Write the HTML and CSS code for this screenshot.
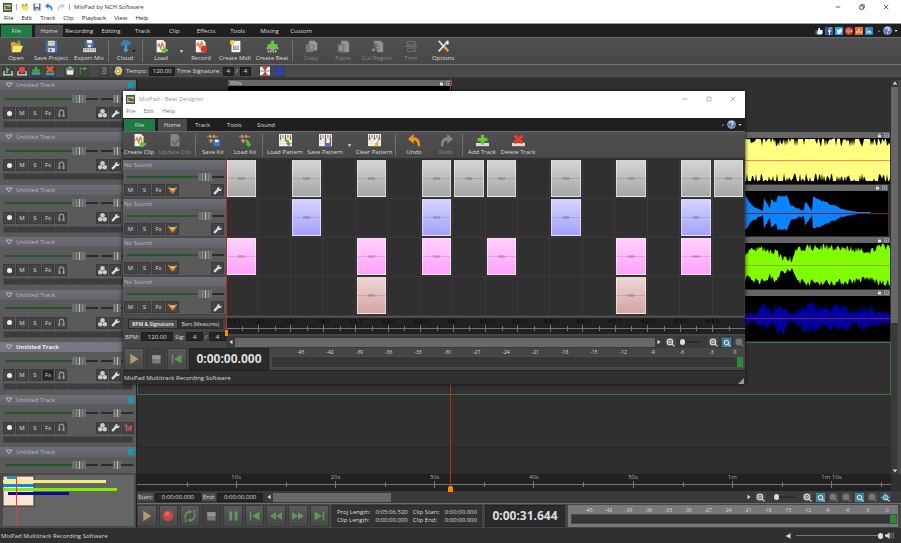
FILE: index.html
```
<!DOCTYPE html>
<html lang="en">
<head>
    <meta charset="UTF-8">
    <meta name="viewport" content="width=device-width, initial-scale=1.0">
    <title>MixPad by NCH Software</title>
    <link rel="stylesheet" href="styles.css">
</head>
<body>
    <svg class="defs" aria-hidden="true">
        <symbol id="logo" viewBox="0 0 16 16"><rect width="16" height="16" fill="#2c5580"/><rect x="2" y="3" width="12" height="10" fill="#e8cf45"/><path d="M3 6h4v5M9 5v5h4V6M3 9h10" stroke="#243f63" stroke-width="1.5" fill="none"/></symbol>
        <symbol id="folder" viewBox="0 0 16 16"><path d="M1 3l5-1 1 2h6v3H4L2 14z" fill="#d9a92c"/><path d="M4 7h12l-3 8H2z" fill="#f6e36c"/><path d="M8 1l5 0-1 5z" fill="#5bb53c"/></symbol>
        <symbol id="disk" viewBox="0 0 16 16"><path d="M1 1h14v14H1z" fill="#3f78b5"/><path d="M4 1h8v6H4z" fill="#f2eadb"/><path d="M4 10h8v5H4z" fill="#e2e8ee"/><path d="M5 3h6M5 5h6" stroke="#dc9a57"/><path d="M6 11h2v3H6z" fill="#345"/></symbol>
        <symbol id="disk2" viewBox="0 0 16 16"><path d="M1 1h14v14H1z" fill="#6566ad"/><path d="M4 1h8v7H4z" fill="#fff"/><path d="M5 11h6v4H5z" fill="#d8d8ec"/></symbol>
        <symbol id="export" viewBox="0 0 16 16"><path d="M3 0h10v9H3z" fill="#3f78b5"/><path d="M5 0h6v4H5z" fill="#f2eadb"/><path d="M6 6h4v3H6z" fill="#dde"/><path d="M0 10h16v5H0z" fill="#cfd3d2"/><path d="M2 11v2M5 11v2M8 11v2M11 11v2M14 11v2" stroke="#6a7a70"/></symbol>
        <symbol id="cloud" viewBox="0 0 16 16"><path d="M3 7a3 3 0 0 1 1-5 4 4 0 0 1 7-1 3 3 0 0 1 3 5l-3 1z" fill="#2f80bd"/><path d="M7 6h3v5h2l-4 5-3-5h2z" fill="#4b9bd0"/></symbol>
        <symbol id="clipadd" viewBox="0 0 16 16"><path d="M2 0h8l3 3v12H2z" fill="#f8f5ee"/><path d="M3 8l2-3 2 5 2-6 2 4" stroke="#dc8450" stroke-width="2" fill="none"/><path d="M10 9h3v2h3v3h-3v2h-3v-2H8v-3h2z" fill="#5dc43a"/></symbol>
        <symbol id="cliprec" viewBox="0 0 16 16"><path d="M1 0h9l3 3v12H1z" fill="#f8f5ee"/><path d="M2 7l2-3 2 5 2-6 2 4" stroke="#dc8450" stroke-width="2" fill="none"/><circle cx="11" cy="11" r="4" fill="#e23126"/></symbol>
        <symbol id="midi" viewBox="0 0 16 16"><path d="M3 1h11v14H3z" fill="#f5f5f5"/><path d="M5 7h7v5H5z" fill="#777"/><path d="M7 7v4M9 7v4M11 7v4" stroke="#fff"/><circle cx="4" cy="3" r="3" fill="#f4cf2f"/></symbol>
        <symbol id="addrow" viewBox="0 0 16 16"><path d="M0 11h16v4H0z" fill="#d7ded5"/><path d="M6 1h4v4h4v4h-4v4H6V9H2V5h4z" fill="#5fcf35"/></symbol>
        <symbol id="beat" viewBox="0 0 16 16"><path d="M1 10h14M2 14h12" stroke="#bbb" stroke-width="3" stroke-dasharray="2 1"/><path d="M6 1h4v4h4v4h-4v4H6V9H2V5h4z" fill="#5fcf35"/></symbol>
        <symbol id="delrow" viewBox="0 0 16 16"><path d="M0 11h16v4H0z" fill="#d7ded5"/><path d="M3 2l10 9M13 2L3 11" stroke="#ef3a25" stroke-width="4"/></symbol>
        <symbol id="copy" viewBox="0 0 16 16"><path d="M1 5h9v10H1z" fill="#777"/><path d="M5 1h7l3 3v9H5z" fill="#999"/><circle cx="8" cy="9" r="3" fill="none" stroke="#666"/></symbol>
        <symbol id="paste" viewBox="0 0 16 16"><path d="M5 1h8l2 3v11H5z" fill="#929292"/><path d="M1 5h8v10H1z" fill="#777"/><path d="M4 7v6M6 7v6" stroke="#aaa"/></symbol>
        <symbol id="cut" viewBox="0 0 16 16"><path d="M3 1h9l3 3v11H8z" fill="#909090"/><path d="M1 7h8M2 11h8M6 3v10" stroke="#666"/><circle cx="3" cy="12" r="2" fill="#888"/></symbol>
        <symbol id="trim" viewBox="0 0 16 16"><path d="M3 2h10M3 14h10M3 2v3M13 2v3M3 11v3M13 11v3M0 8h16M2 6h12M3 10h10" stroke="#7d7d7d" fill="none"/></symbol>
        <symbol id="tools" viewBox="0 0 16 16"><path d="M2 1l8 9M14 1L2 14" stroke="#dfe6ea" stroke-width="2"/><path d="M9 8l5 6" stroke="#e6a21b" stroke-width="3"/><path d="M11 2l3 3" stroke="#dfe6ea" stroke-width="3"/></symbol>
        <symbol id="editclip" viewBox="0 0 16 16"><path d="M2 0h8l3 3v12H2z" fill="#858585"/><path d="M4 9l3 4 7-8" stroke="#666" stroke-width="2" fill="none"/></symbol>
        <symbol id="kitsave" viewBox="0 0 16 16"><path d="M0 3h14M2 8h12" stroke="#b07a4d" stroke-width="2"/><path d="M4 1v4M9 1v4M5 6v5" stroke="#d39a62" stroke-width="2"/><path d="M8 7h8v8H8z" fill="#3f78c5"/><path d="M10 7h4v3h-4z" fill="#fff"/></symbol>
        <symbol id="kitload" viewBox="0 0 16 16"><path d="M0 3h14M2 8h9" stroke="#b07a4d" stroke-width="2"/><path d="M4 1v4M9 1v4M5 6v5" stroke="#d39a62" stroke-width="2"/><path d="M8 8q5-1 5 4h3l-4 4-4-4h2q0-2-2-2z" fill="#4ec62b"/></symbol>
        <symbol id="pattern" viewBox="0 0 16 16"><path d="M0 0h16v15H0z" fill="#f5f5f2"/><path d="M2 1v4M5 1v4M8 1v4M11 1v4M14 1v4" stroke="#444"/><path d="M1 6h2M7 6h2M13 6h2" stroke="#c33" stroke-width="2"/><path d="M1 9h5M1 12h5" stroke="#aaa" stroke-dasharray="1 1"/></symbol>
        <symbol id="patload" viewBox="0 0 16 16"><use href="#pattern"/><path d="M7 7q6-1 6 4h3l-4 4-4-4h2q0-2-3-2z" fill="#3cb52a"/></symbol>
        <symbol id="patsave" viewBox="0 0 16 16"><use href="#pattern"/><path d="M7 7h8v8H7z" fill="#6566ad"/><path d="M9 7h4v4H9z" fill="#fff"/></symbol>
        <symbol id="patclear" viewBox="0 0 16 16"><use href="#pattern"/><path d="M14 6l-3 5" stroke="#777"/><path d="M8 12l3-2 3 2-2 3H9z" fill="#efb52a"/></symbol>
        <symbol id="undo" viewBox="0 0 16 16"><path d="M0 6l7-6v4q8 0 8 11h-3q0-7-5-7v4z" fill="currentColor"/></symbol>
        <symbol id="redo" viewBox="0 0 16 16"><path d="M16 6L9 0v4Q1 4 1 15h3q0-7 5-7v4z" fill="currentColor"/></symbol>
        <symbol id="phones" viewBox="0 0 16 16"><path d="M4 14V7a4 5 0 0 1 8 0v7" fill="none" stroke="#999" stroke-width="2"/><path d="M3 9h3v5H3zM10 9h3v5h-3z" fill="#999"/></symbol>
        <symbol id="group" viewBox="0 0 16 16"><g fill="#ccc"><circle cx="8" cy="4" r="4"/><circle cx="4" cy="11" r="4"/><circle cx="12" cy="11" r="4"/></g></symbol>
        <symbol id="wrench" viewBox="0 0 16 16"><path d="M2 14l8-8" stroke="currentColor" stroke-width="4"/><path d="M9 2l3 0-1 3 2 1 2-2q1 5-3 5-5 0-5-4 0-2 2-3z" fill="currentColor"/></symbol>
        <symbol id="auto" viewBox="0 0 16 16"><path d="M1 2h3v12M6 5l3 8 3-8 2 8" stroke="#b8b8b8" fill="none"/><path d="M1 3l5 10 3-6 3 6 3-8" stroke="#d03a3a" stroke-width="2" fill="none"/></symbol>
        <symbol id="drum" viewBox="0 0 16 16"><path d="M2 5h12l-2 6H5z" fill="#c8802c"/><path d="M0 3l6 2M16 3l-6 2" stroke="#e6a84b" stroke-width="2"/><ellipse cx="8" cy="6" rx="4" ry="2" fill="#f4c272"/><path d="M6 10h4v3H6z" fill="#c8802c"/></symbol>
        <symbol id="loudadd" viewBox="0 0 16 16"><path d="M2 8l-1 6h14l-1-6" stroke="#ddd" stroke-width="2" fill="none"/><path d="M5 1l6 5-3 1v4H5z" fill="#53b65b"/></symbol>
        <symbol id="loudrec" viewBox="0 0 16 16"><path d="M2 8l-1 6h14l-1-6" stroke="#ddd" stroke-width="2" fill="none"/><circle cx="8" cy="6" r="5" fill="#e34b42"/></symbol>
        <symbol id="rowadd" viewBox="0 0 16 16"><path d="M1 10h14v4H1z" fill="#359bc9"/><path d="M6 1h4v4h4v4h-4v3H6V9H2V5h4z" fill="#3fa632"/></symbol>
        <symbol id="rowdel" viewBox="0 0 16 16"><path d="M1 11h14v4H1z" fill="#359bc9"/><path d="M3 1l10 9M13 1L3 10" stroke="#df5f2c" stroke-width="4"/></symbol>
        <symbol id="piano" viewBox="0 0 16 16"><path d="M2 3h12l-1 11H3z" fill="#eee"/><path d="M2 3h12v4H2z" fill="#4ba04b"/><path d="M5 2h6" stroke="#9ad" stroke-width="2"/></symbol>
        <symbol id="snap" viewBox="0 0 16 16"><path d="M2 2v12M2 4h13" stroke="#3ca04b" stroke-width="2" stroke-dasharray="3 1"/><path d="M6 4l4-3v6z" fill="#53c94f"/></symbol>
        <symbol id="marker" viewBox="0 0 16 16"><path d="M4 3h7v9H4M6 6h4M5 9h4" stroke="#8b8b8b" stroke-width="1.5" fill="none"/></symbol>
        <symbol id="metro" viewBox="0 0 16 16"><path d="M5 1h7l3 5-2 7-6 2-5-5z" fill="#e2cd7c"/><circle cx="8" cy="8" r="3" fill="#f7f3de" stroke="#6f5d28"/></symbol>
        <symbol id="split" viewBox="0 0 16 16"><path d="M0 1h16v14H0z" fill="#f2f2f2"/><path d="M0 8h16M8 1v14" stroke="#445"/><path d="M3 1h10L8 7zM3 15h10L8 9z" fill="#dc2f24"/></symbol>
        <symbol id="gridic" viewBox="0 0 16 16"><path d="M0 1h16v14H0z" fill="#26327c"/><path d="M1 2h14v12H1zM5 2v12M8 2v12M11 2v12M1 6h14M1 10h14" stroke="#4458c4" fill="none"/></symbol>
        <symbol id="play" viewBox="0 0 16 16"><path d="M3 1l11 7-11 7z" fill="#b29b66"/></symbol>
        <symbol id="rec" viewBox="0 0 16 16"><circle cx="8" cy="8" r="7" fill="#cc4444"/><circle cx="7" cy="5" r="3" fill="#dd6c6c"/></symbol>
        <symbol id="loop" viewBox="0 0 16 16"><path d="M2 11a7 7 0 0 1 5-9M14 5a7 7 0 0 1-5 9" stroke="#5d9a56" stroke-width="2" fill="none"/><path d="M6 0l5 2-4 3zM10 16l-5-2 4-3zM12 0h1v4h-1zM14 0h1v4h-1zM1 12h1v4H1zM3 12h1v4H3z" fill="#5d9a56"/></symbol>
        <symbol id="stop" viewBox="0 0 16 16"><path d="M3 3h11v11H3z" fill="#777b77"/><path d="M3 3h11v5H3z" fill="#939993"/></symbol>
        <symbol id="pause" viewBox="0 0 16 16"><path d="M3 2h4v12H3zM10 2h4v12h-4z" fill="#5d9a56"/></symbol>
        <symbol id="first" viewBox="0 0 16 16"><path d="M1 2h2v12H1zM14 2v12L4 8z" fill="#5d9a56"/></symbol>
        <symbol id="last" viewBox="0 0 16 16"><path d="M13 2h2v12h-2zM2 2v12l10-6z" fill="#5d9a56"/></symbol>
        <symbol id="rew" viewBox="0 0 16 16"><path d="M8 3v10L0 8zM16 3v10L8 8z" fill="#5d9a56"/></symbol>
        <symbol id="fwd" viewBox="0 0 16 16"><path d="M8 3v10l8-5zM0 3v10l8-5z" fill="#5d9a56"/></symbol>
        <symbol id="zoom" viewBox="0 0 16 16"><circle cx="7" cy="7" r="5" fill="#777" stroke="currentColor" stroke-width="2"/><path d="M4 7h6M11 11l4 4" stroke="currentColor" stroke-width="2"/></symbol>
        <symbol id="zoomall" viewBox="0 0 16 16"><path d="M0 0h16v16H0z" fill="#2192b8"/><path d="M3 3h10v10H3z" fill="#444"/><circle cx="8" cy="8" r="4" fill="#777" stroke="#ddd" stroke-width="2"/><path d="M11 11l4 4" stroke="#ddd" stroke-width="2"/></symbol>
        <symbol id="zoomfull" viewBox="0 0 16 16"><circle cx="8" cy="8" r="4" fill="#777" stroke="#ddd" stroke-width="2"/><path d="M0 8h16M8 0v9" stroke="#39b3d8" stroke-width="3"/><path d="M11 11l4 4" stroke="#ddd" stroke-width="2"/></symbol>
        <symbol id="help" viewBox="0 0 16 16"><circle cx="8" cy="8" r="7" fill="#4a76c4" stroke="#dbe4f5"/><path d="M5 6q0-3 3-3t3 3q0 1-3 3M8 11v2" stroke="#fff" stroke-width="2" fill="none"/></symbol>
        <symbol id="thumb" viewBox="0 0 16 16"><path d="M1 7h4v8H1z" fill="#4c7ac0"/><path d="M5 8l3-7q3 0 2 5h5v7l-2 2H5z" fill="#fff"/></symbol>
        <symbol id="fb" viewBox="0 0 16 16"><path d="M0 0h16v16H0z" fill="#3b5998"/><path d="M9 16V5q0-3 4-3M6 8h7" stroke="#fff" stroke-width="2" fill="none"/></symbol>
        <symbol id="tw" viewBox="0 0 16 16"><path d="M0 0h16v16H0z" fill="#1da1f2"/><path d="M2 12h3L3 4l5 3q0-4 3-4l3 1q0 9-7 10z" fill="#fff"/></symbol>
        <symbol id="gp" viewBox="0 0 16 16"><circle cx="8" cy="8" r="8" fill="#d9412f"/><path d="M9 6a3 3 0 1 0 0 4V8H6M11 8h4M13 6v4" stroke="#fff" fill="none"/></symbol>
        <symbol id="share" viewBox="0 0 16 16"><path d="M0 0h16v16H0z" fill="#f0692a"/><path d="M3 8v3h3V6q2-3 4 0v1M10 8v3h3V8" stroke="#fff" stroke-width="1.5" fill="none"/></symbol>
        <symbol id="lin" viewBox="0 0 16 16"><path d="M0 0h16v16H0z" fill="#2386bd"/><path d="M4 7v6M4 3v2M8 13V7M8 9q4-3 4 4" stroke="#fff" stroke-width="2" fill="none"/></symbol>
        <symbol id="lock" viewBox="0 0 16 16"><path d="M3 7h10v7H3z" fill="#eee"/><path d="M5 8V4q3-4 6 0" stroke="#eee" stroke-width="2" fill="none"/></symbol>
        <symbol id="clipmenu" viewBox="0 0 16 16"><path d="M2 2h12v12H2z" fill="#4a5c70" stroke="#b9c8d8" stroke-width="2"/><path d="M5 7h6l-3 4z" fill="#dde"/></symbol>
        <symbol id="min" viewBox="0 0 16 16"><path d="M2 8h12" stroke="currentColor" stroke-width="2"/></symbol>
        <symbol id="max" viewBox="0 0 16 16"><path d="M3 3h10v10H3z" stroke="currentColor" stroke-width="2" fill="none"/></symbol>
        <symbol id="restore" viewBox="0 0 16 16"><path d="M2 5h9v9H2zM5 5V2h9v9h-3" stroke="currentColor" stroke-width="2" fill="none"/></symbol>
        <symbol id="close" viewBox="0 0 16 16"><path d="M2 2l12 12M14 2L2 14" stroke="currentColor" stroke-width="2"/></symbol>
        <symbol id="down" viewBox="0 0 8 8"><path d="M1 2h6L4 6z" fill="currentColor"/></symbol>
        <symbol id="up" viewBox="0 0 8 8"><path d="M1 6h6L4 2z" fill="currentColor"/></symbol>
        <symbol id="left" viewBox="0 0 8 8"><path d="M6 1v6L2 4z" fill="currentColor"/></symbol>
        <symbol id="right" viewBox="0 0 8 8"><path d="M2 1v6l4-3z" fill="currentColor"/></symbol>
        <symbol id="spk" viewBox="0 0 16 16"><path d="M1 6h3l5-4v12l-5-4H1z" fill="#ddd"/></symbol>
        <symbol id="spk2" viewBox="0 0 16 16"><path d="M0 6h3l5-4v12l-5-4H0z" fill="#ddd"/><path d="M10 4v8M12 3v10M15 2v12" stroke="#999"/></symbol>
    </svg>

    <div class="app">
        <header class="titlebar">
            <svg class="ic9"><use href="#logo"/></svg><i class="tsep"></i>
            <button aria-label="Open"><svg class="ic8"><use href="#folder"/></svg></button>
            <button aria-label="Save"><svg class="ic8"><use href="#disk2"/></svg></button>
            <button class="blue" aria-label="Undo"><svg class="ic8"><use href="#undo"/></svg></button>
            <button class="pale" aria-label="Redo"><svg class="ic8"><use href="#redo"/></svg></button>
            <i class="tsep"></i>
            <h1>MixPad by NCH Software</h1>
            <div class="winbtns">
                <button aria-label="Minimize"><svg class="ic6"><use href="#min"/></svg></button>
                <button aria-label="Restore"><svg class="ic6"><use href="#restore"/></svg></button>
                <button aria-label="Close"><svg class="ic6"><use href="#close"/></svg></button>
            </div>
        </header>
        <nav class="menu">
            <a href="#">File</a><a href="#">Edit</a><a href="#">Track</a><a href="#">Clip</a><a href="#">Playback</a><a href="#">View</a><a href="#">Help</a>
        </nav>
        <div class="tabbar">
            <div class="tabs">
                <button class="file">File</button><button class="on">Home</button><button>Recording</button><button>Editing</button><button>Track</button><button>Clip</button><button>Effects</button><button>Tools</button><button>Mixing</button><button>Custom</button>
            </div>
            <div class="social">
                <a href="#" aria-label="Like"><svg class="ic8"><use href="#thumb"/></svg></a>
                <a href="#" aria-label="Facebook"><svg class="ic8"><use href="#fb"/></svg></a>
                <a href="#" aria-label="Twitter"><svg class="ic8"><use href="#tw"/></svg></a>
                <a href="#" aria-label="Google"><svg class="ic8"><use href="#gp"/></svg></a>
                <a href="#" aria-label="Share"><svg class="ic8"><use href="#share"/></svg></a>
                <a href="#" aria-label="LinkedIn"><svg class="ic8"><use href="#lin"/></svg></a>
            </div>
            <div class="helpbox"><svg class="ic4 dim"><use href="#up"/></svg><svg class="ic9"><use href="#help"/></svg><svg class="ic4"><use href="#down"/></svg></div>
        </div>
        <div class="ribbon">
            <button><svg><use href="#folder"/></svg>Open</button>
            <button class="wide"><svg><use href="#disk"/></svg>Save Project</button>
            <button class="wide"><svg><use href="#export"/></svg>Export Mix</button>
            <i class="sep thin"></i>
            <button class="drop"><svg><use href="#cloud"/></svg>Cloud</button>
            <i class="sep"></i>
            <button><svg><use href="#clipadd"/></svg>Load</button>
            <button class="arrow" aria-label="Load options"><svg><use href="#down"/></svg></button>
            <button><svg><use href="#cliprec"/></svg>Record</button>
            <button class="mid"><svg><use href="#midi"/></svg>Create Midi</button>
            <button class="wide"><svg><use href="#beat"/></svg>Create Beat</button>
            <i class="sep"></i>
            <button disabled><svg><use href="#copy"/></svg>Copy</button>
            <button disabled><svg><use href="#paste"/></svg>Paste</button>
            <button class="mid" disabled><svg><use href="#cut"/></svg>Cut Region</button>
            <button disabled><svg><use href="#trim"/></svg>Trim</button>
            <button><svg><use href="#tools"/></svg>Options</button>
        </div>
        <div class="strip">
            <button aria-label="Add clip"><svg><use href="#loudadd"/></svg></button>
            <button aria-label="Record clip"><svg><use href="#loudrec"/></svg></button>
            <button aria-label="Add track"><svg><use href="#rowadd"/></svg></button>
            <button aria-label="Delete track"><svg><use href="#rowdel"/></svg></button>
            <i class="space"></i>
            <button aria-label="Piano"><svg><use href="#piano"/></svg></button>
            <button aria-label="Snap"><svg><use href="#snap"/></svg></button>
            <i class="space"></i>
            <button aria-label="Marker"><svg><use href="#marker"/></svg></button>
            <button aria-label="Metronome"><svg><use href="#metro"/></svg></button>
            <label for="tempo">Tempo:</label><input id="tempo" class="f26" value="120.00">
            <label for="ts1">Time Signature:</label><input id="ts1" class="f12" value="4"><span>/</span><input class="f12" aria-label="Beat unit" value="4">
            <i class="space"></i>
            <button aria-label="Split"><svg><use href="#split"/></svg></button>
            <button aria-label="Grid"><svg><use href="#gridic"/></svg></button>
        </div>

        <main class="work">
            <aside class="side">
                <div class="tracks" id="tracks"></div>
                <div class="overview">
                    <svg width="131" height="51">
                        <rect x="0" y="1" width="31" height="30" fill="#ffe4d2" stroke="#333"/>
                        <rect x="4" y="1" width="9" height="3" fill="#2397ab"/>
                        <rect y="5" width="103" height="3" fill="#f4ee7c"/>
                        <rect y="9" width="31" height="3" fill="#0a83f5"/>
                        <rect y="13" width="114" height="3" fill="#7fee05"/>
                        <rect x="5" y="17" width="61" height="3" fill="#0a0a96"/>
                        <path d="M13.500 1v50" stroke="#e23b3b"/>
                    </svg>
                </div>
            </aside>
            <section class="right">
                <div class="stage">
                    <div class="lanes">
                        <div class="lane"><div class="clip intro"><div class="cliphead"><span>Xlns</span><svg><use href="#lock"/></svg><svg><use href="#clipmenu"/></svg></div><div class="wavebox"></div></div></div>
                        <div class="lane"><div class="clip"><div class="cliphead"><svg><use href="#lock"/></svg><svg><use href="#clipmenu"/></svg></div><div class="wavebox"><svg id="wave1" class="yellow"></svg></div></div></div>
                        <div class="lane"><div class="clip short"><div class="cliphead"><svg><use href="#lock"/></svg><svg><use href="#clipmenu"/></svg></div><div class="wavebox"><svg id="wave2" class="azure"></svg></div></div></div>
                        <div class="lane"><div class="clip"><div class="cliphead"><svg><use href="#lock"/></svg><svg><use href="#clipmenu"/></svg></div><div class="wavebox"><svg id="wave3" class="lime"></svg></div></div></div>
                        <div class="lane"><div class="clip"><div class="cliphead"><svg><use href="#lock"/></svg><svg><use href="#clipmenu"/></svg></div><div class="wavebox"><svg id="wave4" class="navy"></svg></div></div></div>
                        <div class="lane selected"></div>
                        <div class="lane"></div>
                        <div class="lane last"></div>
                    </div>
                    <div class="vscroll"><svg class="ic6"><use href="#up"/></svg><i></i><svg class="ic6"><use href="#down"/></svg></div>
                </div>
                <div class="ruler secs"><span></span><span>10s</span><span>20s</span><span>30s</span><span>40s</span><span>50s</span><span>1m</span><span>1m 10s</span><span></span></div>
                <div class="playhead"></div>
                <div class="range">
                    <label for="start">Start:</label><input id="start" class="f46" value="0:00:00.000">
                    <label for="end">End:</label><input id="end" class="f46" value="0:00:00.000">
                    <div class="hscroll"><svg class="ic6"><use href="#left"/></svg><div><i class="part"></i></div><svg class="ic6"><use href="#right"/></svg></div>
                    <div class="zooms">
                        <button aria-label="Zoom out"><svg><use href="#zoom"/></svg></button>
                        <input type="range" class="zoomer" aria-label="Zoom" value="8">
                        <button aria-label="Zoom in"><svg><use href="#zoom"/></svg></button>
                        <button aria-label="Zoom all"><svg><use href="#zoomall"/></svg></button>
                        <button disabled aria-label="Zoom selection"><svg><use href="#zoom"/></svg></button>
                        <button disabled aria-label="Zoom clip"><svg><use href="#zoom"/></svg></button>
                        <button aria-label="Zoom vertical"><svg><use href="#zoomall"/></svg></button>
                        <button disabled aria-label="Zoom back"><svg><use href="#zoom"/></svg></button>
                        <button aria-label="Zoom full"><svg><use href="#zoomfull"/></svg></button>
                    </div>
                </div>
                <div class="transport">
                    <div class="keys">
                        <button aria-label="Play"><svg><use href="#play"/></svg></button>
                        <button aria-label="Record"><svg><use href="#rec"/></svg></button>
                        <button aria-label="Loop"><svg><use href="#loop"/></svg></button>
                        <button class="down" aria-label="Stop"><svg><use href="#stop"/></svg></button>
                        <button aria-label="Pause"><svg><use href="#pause"/></svg></button>
                        <button aria-label="To start"><svg><use href="#first"/></svg></button>
                        <button aria-label="Rewind"><svg><use href="#rew"/></svg></button>
                        <button aria-label="Forward"><svg><use href="#fwd"/></svg></button>
                        <button aria-label="To end"><svg><use href="#last"/></svg></button>
                    </div>
                    <dl class="info">
                        <dt>Proj Length:</dt><dd>0:05:06.520</dd><dt>Clip Start:</dt><dd>0:00:00.000</dd>
                        <dt>Clip Length:</dt><dd>0:00:00.000</dd><dt>Clip End:</dt><dd>0:00:00.000</dd>
                    </dl>
                    <output class="time">0:00:31.644</output>
                    <div class="meter"><div class="db"></div><div class="bar"><i></i></div></div>
                </div>
            </section>
        </main>
        <footer class="status">
            <span>MixPad Multitrack Recording Software</span>
            <div class="vol"><svg class="ic8"><use href="#spk"/></svg><input type="range" class="mainvol" aria-label="Volume" value="100"><svg class="ic9"><use href="#spk2"/></svg></div>
        </footer>
    </div>

    <div class="dialog" role="dialog" aria-label="Beat Designer">
        <div class="titlebar">
            <svg class="ic9"><use href="#logo"/></svg>
            <h2>MixPad - Beat Designer</h2>
            <div class="winbtns">
                <button aria-label="Minimize"><svg class="ic6"><use href="#min"/></svg></button>
                <button aria-label="Maximize"><svg class="ic6"><use href="#max"/></svg></button>
                <button aria-label="Close"><svg class="ic6"><use href="#close"/></svg></button>
            </div>
        </div>
        <nav class="menu"><a href="#">File</a><a href="#">Edit</a><a href="#">Help</a></nav>
        <div class="tabbar">
            <div class="tabs"><button class="file">File</button><button class="on">Home</button><button>Track</button><button>Tools</button><button>Sound</button></div>
            <div class="helpbox"><svg class="ic4 dim"><use href="#up"/></svg><svg class="ic9"><use href="#help"/></svg><svg class="ic4"><use href="#down"/></svg></div>
        </div>
        <div class="ribbon">
            <button><svg><use href="#clipadd"/></svg>Create Clip</button>
            <button class="xwide" disabled><svg><use href="#editclip"/></svg>Update Clip</button>
            <i class="sep thin"></i>
            <button><svg><use href="#kitsave"/></svg>Save Kit</button>
            <button><svg><use href="#kitload"/></svg>Load Kit</button>
            <i class="sep"></i>
            <button class="xwide"><svg><use href="#patload"/></svg>Load Pattern</button>
            <button class="xwide"><svg><use href="#patsave"/></svg>Save Pattern</button>
            <button class="arrow" aria-label="Save options"><svg><use href="#down"/></svg></button>
            <button class="xwide"><svg><use href="#patclear"/></svg>Clear Pattern</button>
            <i class="sep"></i>
            <button><svg class="orange"><use href="#undo"/></svg>Undo</button>
            <button disabled><svg><use href="#redo"/></svg>Redo</button>
            <i class="sep thin"></i>
            <button class="mid"><svg><use href="#addrow"/></svg>Add Track</button>
            <button class="mid"><svg><use href="#delrow"/></svg>Delete Track</button>
        </div>
        <div class="beats">
            <div class="kit" id="kit"></div>
            <div class="pads" id="pads"></div>
        </div>
        <div class="lower">
            <div class="bpm">
                <div class="bpmtabs"><button class="on">BPM &amp; Signature</button><button>Bars (Measures)</button></div>
                <div class="bpmrow"><label for="bpm">BPM:</label><input id="bpm" class="f32" value="120.00"><label for="sig">Sig:</label><input id="sig" class="f18" value="4"><span>/</span><input class="f18" aria-label="Sig unit" value="4"></div>
            </div>
            <div class="lowright">
                <div class="ruler bars" id="bars"></div>
                <div class="range">
                    <div class="hscroll"><svg class="ic6"><use href="#left"/></svg><div><i></i></div><svg class="ic6"><use href="#right"/></svg></div>
                    <div class="zooms">
                        <button aria-label="Zoom out"><svg><use href="#zoom"/></svg></button>
                        <input type="range" class="zoomer" aria-label="Zoom" value="5">
                        <button aria-label="Zoom in"><svg><use href="#zoom"/></svg></button>
                        <button aria-label="Zoom all"><svg><use href="#zoomall"/></svg></button>
                        <button disabled aria-label="Zoom back"><svg><use href="#zoom"/></svg></button>
                    </div>
                </div>
            </div>
        </div>
        <div class="transport">
            <div class="keys">
                <button aria-label="Play"><svg><use href="#play"/></svg></button>
                <button class="down" aria-label="Stop"><svg><use href="#stop"/></svg></button>
                <button aria-label="To start"><svg><use href="#first"/></svg></button>
            </div>
            <output class="time">0:00:00.000</output>
            <div class="meter"><div class="db"></div><div class="bar"><i></i></div></div>
        </div>
        <div class="status"><span>MixPad Multitrack Recording Software</span><i class="grip"></i></div>
        <div class="cursor"></div>
    </div>
    <script src="script.js"></script>
</body>
</html>
```
FILE: styles.css
```
*, *::before, *::after{
    margin: 0;
    padding: 0;
    box-sizing: border-box;
}
body{
    font-family: "Open Sans", "Noto Sans", sans-serif;
    font-size: 6px;
    line-height: 8px;
    color: #ddd;
    background: #303030;
    position: relative;
}
button, input, output{
    font: inherit;
    color: inherit;
    border: 0;
    background: none;
    min-width: 0;
}
button{
    display: flex;
    align-items: center;
    justify-content: center;
    white-space: nowrap;
}
a{
    color: inherit;
    text-decoration: none;
}
svg{
    display: block;
    flex: none;
}
.defs{
    position: absolute;
    width: 0;
    height: 0;
}
.ic4{ width: 4px; height: 4px; }
.ic6{ width: 6px; height: 6px; }
.ic8{ width: 8px; height: 8px; }
.ic9{ width: 9px; height: 9px; }
.dim{ color: #777; }
.orange{ color: #f49322; }
.app{
    min-height: 100vh;
    display: flex;
    flex-direction: column;
}

/* title and menu */
.titlebar{
    height: 14px;
    padding-left: 3px;
    display: flex;
    align-items: center;
    gap: 4px;
    background: #fff;
    color: #333;
}
.titlebar h1, .titlebar h2{
    font-size: 6px;
    font-weight: normal;
}
.tsep{
    width: 1px;
    height: 6px;
    background: #aaa;
}
.blue{ color: #1f8fe0; }
.pale{ color: #c8d0d6; }
.winbtns{
    margin-left: auto;
    display: flex;
    gap: 18px;
    padding-right: 12px;
}
.menu{
    height: 10px;
    padding-left: 4px;
    display: flex;
    gap: 8px;
    background: #fff;
    color: #222;
    border-bottom: 1px solid #999;
}

/* tabs */
.tabbar{
    height: 13px;
    display: flex;
    align-items: center;
    background: #1f1f1f;
}
.tabs{
    width: 317px;
    height: 13px;
    padding-top: 1px;
    display: grid;
    grid-template-columns: repeat(10, 1fr);
}
.tabs .file{
    margin: 0 0 0 1px;
    background: #1f7a45;
}
.tabs .on{
    margin: 0 0 0 3px;
    background: #4a4a4a;
}
.social{
    margin-left: auto;
    display: flex;
    gap: 2px;
}
.helpbox{
    display: flex;
    align-items: center;
    gap: 2px;
    padding: 0 3px 0 4px;
}
.tabbar > .tabs + .helpbox{ margin-left: auto; }

/* ribbon */
.ribbon{
    height: 27px;
    display: flex;
    background: linear-gradient(#505050, #474747);
    border-top: 1px solid #6a6a6a;
}
.ribbon button{
    width: 32px;
    flex: none;
    flex-direction: column;
    gap: 1px;
    position: relative;
}
.ribbon button svg{
    width: 13px;
    height: 13px;
}
.ribbon .mid{ width: 36px; }
.ribbon .wide{ width: 38px; }
.ribbon .xwide{ width: 40px; }
.ribbon button:disabled{ color: #888; }
.ribbon .arrow{ width: 8px; }
.ribbon .arrow svg{ width: 5px; height: 5px; }
.ribbon .drop::after{
    content: "";
    position: absolute;
    right: 5px;
    top: 12px;
    border: 2px solid transparent;
    border-top-color: #111;
}
.sep{
    width: 2px;
    margin: 2px 1px;
    border-left: 1px solid #707070;
}
.thin{
    width: 1px;
    margin: 2px 0;
}

/* small toolbar */
.strip{
    height: 14px;
    padding-left: 2px;
    display: flex;
    align-items: center;
    gap: 2px;
    background: #4a4a4a;
    border-top: 1px solid #757575;
    border-bottom: 1px solid #3a3a3a;
}
.strip button{
    width: 12px;
    height: 11px;
    background: #414141;
}
.strip button svg{
    width: 10px;
    height: 10px;
}
.strip .space{ width: 4px; }
input:not([type=range]){
    height: 9px;
    text-align: center;
    background: #262626;
    border: 1px solid #1c1c1c;
}
.f12{ width: 11px; }
.f18{ width: 17px; }
.f26{ width: 26px; }
.f32{ width: 32px; }
.f46{ width: 46px; }

/* track list */
.work{
    flex: 1;
    display: flex;
}
.side{
    width: 137px;
    flex: none;
    padding-top: 2px;
    display: flex;
    flex-direction: column;
    border-right: 1px solid #222;
}
.tracks{
    flex: 1;
    display: grid;
    grid-template-rows: repeat(7, 1fr) 26px;
}
.track{
    min-height: 0;
    overflow: hidden;
    background: #5a5a5a;
}
.trackhead{
    height: 10px;
    padding: 0 2px 0 5px;
    display: flex;
    align-items: center;
    gap: 3px;
    color: #bbb;
    background: linear-gradient(#6f6f78, #62626a);
}
.trackhead span{ flex: 1; }
.trackhead svg{ width: 8px; height: 6px; }
.trackhead i{
    width: 6px;
    height: 6px;
    background: #159ab0;
}
.current .trackhead{
    color: #eee;
    font-weight: bold;
    background: #777782;
}
.sliders{
    height: 17px;
    padding: 0 3px 0 5px;
    display: flex;
    align-items: center;
    gap: 3px;
}
.sliders .gain{ flex: 1; }
.sliders .pan{ width: 32px; }
input[type=range]{
    appearance: none;
    -webkit-appearance: none;
    height: 8px;
    min-width: 0;
    background: linear-gradient(#2c2c2c, #2c2c2c) 0 50% / 100% 2px no-repeat;
}
.gain{
    background: linear-gradient(90deg, #24592a 75%, #2c2c2c 75%) 0 50% / 100% 2px no-repeat !important;
}
input[type=range]::-webkit-slider-thumb{
    -webkit-appearance: none;
    width: 14px;
    height: 8px;
    background: linear-gradient(90deg, transparent 4px, #888 4px, #888 5px, transparent 5px, transparent 7px, #bbb 7px, #bbb 8px, transparent 8px, transparent 10px, #888 10px, #888 11px, transparent 11px), #6c6c6c;
}
.pan::-webkit-slider-thumb{
    width: 8px !important;
    background: linear-gradient(90deg, transparent 1px, #888 1px, #888 2px, transparent 2px, transparent 4px, #bbb 4px, #bbb 5px, transparent 5px), #6c6c6c !important;
}
.btns{
    display: flex;
    gap: 1px;
    padding: 0 2px 0 3px;
}
.btns button{
    width: 12px;
    height: 12px;
    background: #444;
    border: 1px solid #3a3a3a;
}
.btns button svg{
    width: 9px;
    height: 9px;
}
.btns .push{ margin-left: auto; }
.btns .pressed{ background: #262626; }
.btns .none{ visibility: hidden; }
.dot{
    width: 5px;
    height: 5px;
    border-radius: 50%;
    background: #eee;
}
.level{
    height: 7px;
    margin: 2px 3px 0;
    background: repeating-linear-gradient(90deg, #3c3c3c 0 12px, #454545 12px 13px);
    border: 1px solid #4c4c4c;
}
.overview{
    height: 55px;
    padding: 2px 2px 2px 3px;
    background: #4a4a4a;
}
.overview svg{ background: #656565; }

/* timeline */
.right{
    flex: 1;
    min-width: 0;
    display: flex;
    flex-direction: column;
    position: relative;
}
.stage{
    flex: 1;
    display: flex;
    padding-top: 2px;
}
.lanes{
    flex: 1;
    display: grid;
    grid-template-rows: repeat(7, 1fr) 27px;
    overflow: hidden;
}
.lane{
    min-height: 0;
    display: flex;
    justify-content: flex-end;
    padding-right: 1px;
}
.selected{
    border: 1px solid #2f7a3c;
}
.lane.last{
    border-top: 1px solid #292929;
    background: #2d2d2d;
}
.clip{
    width: 160px;
    display: flex;
    flex-direction: column;
    margin-bottom: 1px;
}
.clip.short{ margin-right: 2px; }
.clip.intro{
    width: 224px;
    margin-right: auto;
    margin-left: 91px;
}
.cliphead{
    height: 6px;
    padding-right: 1px;
    display: flex;
    align-items: center;
    justify-content: flex-end;
    gap: 2px;
    background: #666;
}
.cliphead span{
    flex: 1;
    padding-left: 2px;
    line-height: 6px;
}
.cliphead svg{ width: 5px; height: 5px; }
.wavebox{
    flex: 1;
    background: #000;
}
.wavebox svg{
    width: 160px;
    height: 45px;
}
.yellow{ color: #ffff80; }
.azure{ color: #0a84ff; }
.lime{ color: #80ff00; }
.navy{ color: #0000a0; }
.vscroll{
    width: 10px;
    display: flex;
    flex-direction: column;
    align-items: center;
    background: #3a3a3a;
    border-right: 3px solid #4a4a4a;
}
.vscroll i{
    width: 7px;
    height: 236px;
    margin: 1px 0 auto;
    background: #666;
}
.ruler{
    height: 17px;
    display: grid;
    color: #aaa;
    text-align: center;
    background: #212121;
}
.ruler span{
    white-space: nowrap;
    line-height: 6px;
    background: linear-gradient(#777, #777) 50% 7px / 1px 7px no-repeat, linear-gradient(#777, #777) 0 8px / 1px 5px no-repeat, linear-gradient(#777, #777) 0 10px / 100% 1px no-repeat;
}
.ruler span:first-child{
    background: linear-gradient(#777, #777) 0 10px / 100% 1px no-repeat;
}
.ruler span:last-child{
    background: linear-gradient(#777, #777) 0 8px / 1px 5px no-repeat, linear-gradient(#777, #777) 0 10px / 100% 1px no-repeat;
}
.secs{
    grid-template-columns: 5fr repeat(7, 10fr) 1fr;
    margin-right: 10px;
}
.playhead{
    position: absolute;
    left: 313px;
    top: 0;
    bottom: 36px;
    width: 1px;
    background: #b3301f;
}
.playhead::after{
    content: "";
    position: absolute;
    left: -2px;
    bottom: 0;
    width: 5px;
    height: 6px;
    border-radius: 2px 2px 0 0;
    background: #ff8a00;
}
.range{
    height: 12px;
    padding-right: 10px;
    display: flex;
    align-items: center;
    gap: 1px;
    background: #3a3a3a;
}
.range label{
    background: #4c4c4c;
    padding: 0 1px;
}
.hscroll{
    flex: 1;
    display: flex;
    align-items: center;
    padding: 0 2px;
    gap: 1px;
}
.hscroll div{
    flex: 1;
    height: 9px;
}
.hscroll i{
    display: block;
    height: 9px;
    background: #686868;
}
.hscroll .part{ width: 25%; }
.zooms{
    display: flex;
    align-items: center;
    gap: 2px;
}
.zooms button{
    width: 11px;
    height: 10px;
    color: #ddd;
    background: #444;
}
.zooms button:disabled{ color: #777; }
.zooms svg{ width: 9px; height: 9px; }
.zoomer{
    width: 22px;
    margin: 0 5px;
}
.zoomer::-webkit-slider-thumb, .mainvol::-webkit-slider-thumb{
    width: 5px !important;
    height: 6px !important;
    border-radius: 3px;
    background: #ddd !important;
}

/* transport */
.transport{
    height: 25px;
    padding: 1px 3px 1px 0;
    display: flex;
    gap: 3px;
    background: #454545;
    border-top: 1px solid #707070;
}
.keys{
    width: 192px;
    display: flex;
    gap: 2px;
}
.keys button{
    flex: 1;
    background: linear-gradient(#5a5a5a, #484848);
    border: 1px solid #3a3a3a;
}
.keys .down{ background: #414141; }
.keys svg{ width: 12px; height: 12px; }
.info{
    width: 150px;
    padding: 2px 4px;
    display: grid;
    grid-template-columns: auto auto auto auto;
    justify-content: space-between;
    background: #333;
    border: 1px solid #2a2a2a;
}
.time{
    width: 80px;
    display: flex;
    align-items: center;
    justify-content: center;
    font-size: 12px;
    font-weight: bold;
    background: #2b2b2b;
    border: 1px solid #222;
}
.meter{
    flex: 1;
    min-width: 0;
    padding: 1px 1px 1px 3px;
    background: #77777c;
}
.db{
    display: grid;
    grid-template-columns: repeat(16, 1fr);
    padding-left: 8px;
    text-align: center;
    font-size: 5px;
}
.bar{
    height: 10px;
    display: flex;
    justify-content: flex-end;
    background: #363636;
    border: 1px solid #4c4c4c;
}
.bar i{
    width: 6px;
    background: #2c8a38;
}
.status{
    height: 15px;
    padding: 0 7px 0 1px;
    display: flex;
    align-items: center;
    justify-content: space-between;
    background: #303030;
}
.vol{
    display: flex;
    align-items: center;
    gap: 2px;
}
.mainvol{
    width: 87px;
    background: linear-gradient(#777, #777) 0 50% / 100% 1px no-repeat !important;
}

/* beat designer window */
.dialog{
    position: absolute;
    left: 123px;
    top: 91px;
    width: calc(100% - 279px);
    background: #454545;
    box-shadow: 0 0 4px #111;
}
.dialog .titlebar{
    height: 16px;
    padding-left: 3px;
    color: #999;
}
.dialog .winbtns{ padding-right: 9px; }
.dialog .menu{
    height: 11px;
    padding-left: 3px;
    color: #777;
    border: 0;
}
.dialog .tabs{
    width: 159px;
    grid-template-columns: repeat(5, 1fr);
}
.dialog .thin{ width: 2px; }
.dialog .arrow{ width: 9px; }
.beats{
    display: grid;
    grid-template-columns: 103px 1fr;
    padding-top: 2px;
    background: #303030;
}
.kit .track{
    height: 39px;
    border-bottom: 2px solid #484848;
}
.kit .trackhead{
    padding-left: 1px;
}
.kit .sliders{ height: 14px; padding: 0 2px 0 4px; }
.kit .btns{ padding: 0 2px 0 1px; }
.kit .btns button{ width: 13px; }
.kit .wr{ color: #cfe0f2; }
.pads{
    display: grid;
    grid-template-columns: repeat(16, 1fr);
    grid-auto-rows: 39px;
}
.pad{
    padding: 0 1px 1px;
    border-right: 1px solid #393939;
    border-bottom: 1px solid #393939;
}
.pad.hit::before{
    content: "";
    display: block;
    height: 100%;
    border: 1px solid rgba(255,255,255,.5);
    background: radial-gradient(4px 2px, rgba(0,0,0,.15) 90%, transparent), linear-gradient(transparent 17px, rgba(0,0,0,.12) 17px, rgba(0,0,0,.12) 18px, transparent 18px), linear-gradient(var(--a), var(--b));
}
.gray{ --a: #d4d4d4; --b: #a6a6a6; }
.lilac{ --a: #d6d2ff; --b: #a4a2fc; }
.pink{ --a: #ffd0fb; --b: #ffa2fa; }
.rose{ --a: #ecd6d4; --b: #d4a4a4; }
.lower{
    height: 32px;
    padding-top: 1px;
    display: grid;
    grid-template-columns: 103px 1fr;
    border-top: 1px solid #555;
}
.bpmtabs{
    display: flex;
    padding: 1px 0 0 5px;
    font-size: 5px;
}
.bpmtabs button{
    height: 10px;
    padding: 0 3px;
    background: #333;
    border: 1px solid #2a2a2a;
}
.bpmtabs .on{ background: #505050; font-weight: bold; }
.bpmrow{
    display: flex;
    align-items: center;
    justify-content: space-between;
    padding: 3px 0 0 2px;
}
.lowright{ min-width: 0; }
.bars{
    grid-template-columns: 1fr repeat(15, 2fr) 1fr;
    height: 16px;
    margin-bottom: 2px;
    color: #000;
}
.dialog .range{ padding-right: 0; }
.dialog .zoomer{ margin: 0 5px 0 1px; }
.dialog .transport{
    height: 22px;
    padding: 0 1px;
    gap: 2px;
    border: 0;
}
.dialog .keys{ width: 63px; }
.dialog .meter{
    padding: 0;
    background: none;
}
.dialog .db{
    grid-template-columns: repeat(15, 1fr) 18px;
    padding-left: 15px;
}
.dialog .bar{ height: 12px; }
.dialog .status{
    height: 14px;
    padding-right: 1px;
    border-top: 1px solid #222;
}
.grip{
    align-self: flex-end;
    border: 3px solid transparent;
    border-right-color: #999;
    border-bottom-color: #999;
}
.cursor{
    position: absolute;
    left: 103px;
    top: 67px;
    width: 1px;
    height: 178px;
    background: #b22a2a;
}
.cursor::after{
    content: "";
    position: absolute;
    left: -1px;
    bottom: 0;
    width: 3px;
    height: 6px;
    background: #ff8a00;
}
```
FILE: script.js
```
// track list
var tracks = document.getElementById("tracks");
for(var i = 0; i < 8; i++){
    var cur = i == 5;
    var html = '<div class="track' + (cur ? ' current' : '') + '">' +
        '<div class="trackhead"><svg viewBox="0 0 8 6"><path d="M1 1h6L4 5z" fill="none" stroke="#bbb"/></svg><span>Untitled Track</span><i></i></div>' +
        '<div class="sliders"><input type="range" class="gain" aria-label="Gain" value="85"><input type="range" class="pan" aria-label="Pan" value="50"></div>';
    // the last track is only half open
    if(i < 7){
        html += '<div class="btns"><button aria-label="Arm"><i class="dot"></i></button><button>M</button><button>S</button><button class="' + (cur ? 'pressed' : '') + '">Fx</button>' +
            '<button aria-label="Listen"><svg><use href="#phones"/></svg></button>' +
            '<button class="push" aria-label="Group"><svg><use href="#group"/></svg></button><button aria-label="Settings"><svg><use href="#wrench"/></svg></button>' +
            '<button class="' + (i == 6 ? '' : 'none') + '" aria-label="Automation"><svg><use href="#auto"/></svg></button></div>' +
            '<div class="level"></div>';
    }
    tracks.innerHTML += html + '</div>';
}

// beat designer rows
var rows = [
    {color: "gray", hits: [0, 2, 4, 6, 7, 8, 10, 12, 14, 15]},
    {color: "lilac", hits: [2, 6, 10, 14]},
    {color: "pink", hits: [0, 4, 6, 8, 12, 14]},
    {color: "rose", hits: [4, 12]}
];
var kitHtml = "", padHtml = "";
rows.forEach(function(row){
    kitHtml += '<div class="track"><div class="trackhead"><span>No Sound</span></div>' +
        '<div class="sliders"><input type="range" class="gain" aria-label="Gain" value="85"></div>' +
        '<div class="btns"><button>M</button><button>S</button><button>Fx</button><button aria-label="Drum"><svg><use href="#drum"/></svg></button>' +
        '<button class="push wr" aria-label="Settings"><svg><use href="#wrench"/></svg></button></div></div>';
    for(var c = 0; c < 16; c++){
        padHtml += '<div class="pad' + (row.hits.indexOf(c) > -1 ? ' hit ' + row.color : '') + '"></div>';
    }
});
document.getElementById("kit").innerHTML = kitHtml;
document.getElementById("pads").innerHTML = padHtml;

// bar ruler
var bars = "<span>1.1.1</span>";
for(var b = 1; b < 16; b++){
    bars += "<span>" + (Math.floor(b / 4) + 1) + "." + (b % 4 + 1) + ".1</span>";
}
document.getElementById("bars").innerHTML = bars + "<span></span>";

// meter scale
document.querySelectorAll(".db").forEach(function(el){
    for(var d = -45; d <= 0; d += 3){
        el.innerHTML += "<span>" + d + "</span>";
    }
});

// waveforms
var seed = 7;
function rnd(){
    seed = (seed * 16807) % 2147483647;
    return seed / 2147483647;
}
function lerp(pts, x){
    for(var k = 1; k < pts.length; k++){
        if(x <= pts[k][0]){
            var p = pts[k - 1], q = pts[k];
            return p[1] + (q[1] - p[1]) * (x - p[0]) / (q[0] - p[0]);
        }
    }
    return 0;
}
function wave(id, amp, line){
    var top = "", bottom = "";
    for(var x = 0; x <= 160; x++){
        top += " " + x + "," + (22 - amp(x));
        bottom = " " + x + "," + (22 + amp(x)) + bottom;
    }
    document.getElementById(id).innerHTML = '<polygon fill="currentColor" points="' + top + bottom + '"/><path d="M0 22.5h160" stroke="' + line + '"/>';
}
wave("wave1", function(){
    return rnd() > 0.5 ? 22 - rnd() * 9 : 21;
}, "#ff8a50");
var decay = [[0,5],[16,6],[17,18],[24,9],[33,4],[35,4],[36,16],[42,6],[43,15],[48,12],[50,18],[57,17],[59,19],[63,8],[75,4],[76,4],[77,13],[83,5],[84,4],[85,17],[95,13],[107,8],[118,3],[130,1],[142,1],[143,0],[160,0]];
wave("wave2", function(x){
    var a = lerp(decay, x);
    return a < 4 ? a : a - rnd() * 2;
}, "#8a1a3a");
var dense = [[0,14],[20,15],[32,18],[40,13],[45,16],[52,9],[62,7],[68,17],[80,19],[110,19],[125,17],[140,15],[150,20],[160,20]];
wave("wave3", function(x){
    return lerp(dense, x) + 2 - rnd() * 7;
}, "#b0a020");
var thin = [[0,8],[15,8],[25,5],[35,14],[42,6],[48,16],[54,15],[60,4],[68,8],[78,15],[88,14],[98,10],[105,13],[115,12],[125,8],[135,12],[145,9],[160,5]];
wave("wave4", function(x){
    return Math.max(1, lerp(thin, x) * (0.4 + rnd() * 0.8));
}, "#8a1070");
```
